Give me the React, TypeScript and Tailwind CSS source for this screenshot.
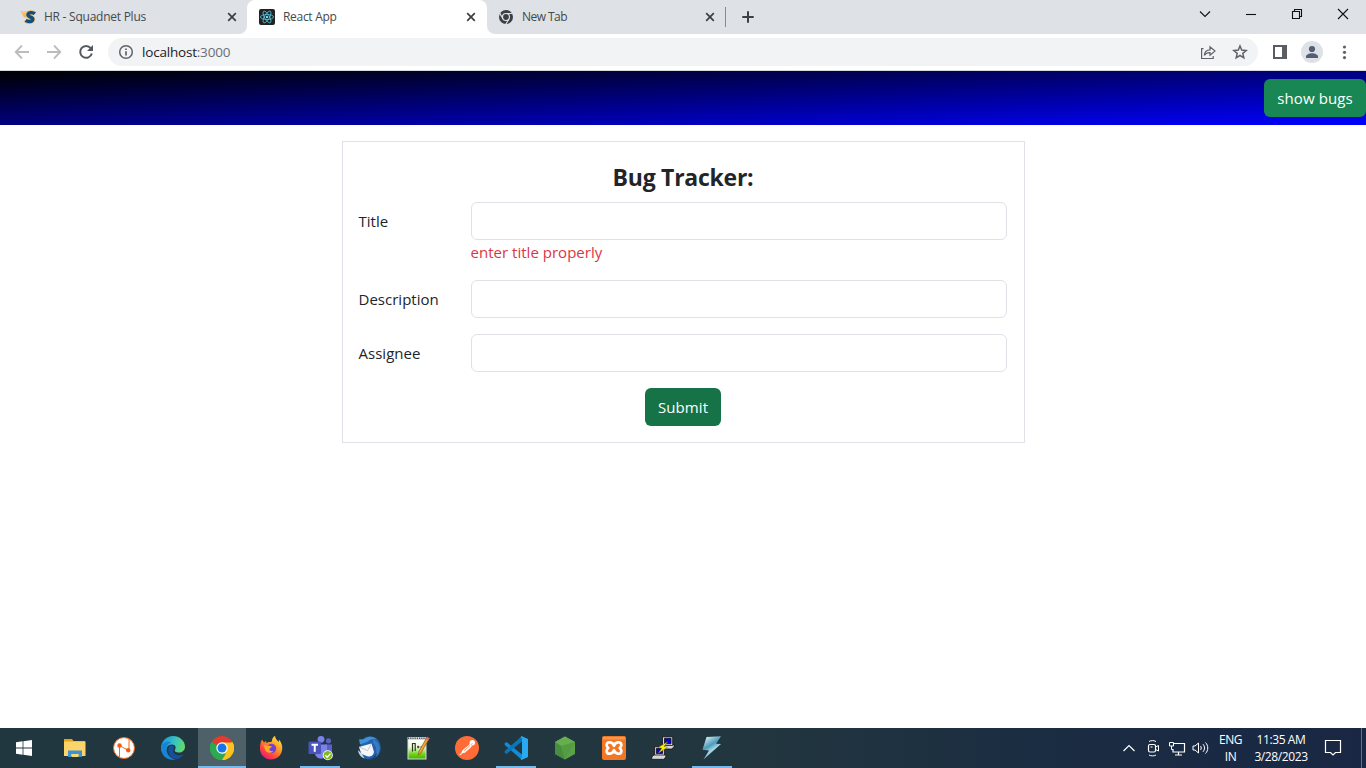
import React from "react";

const UI = "font-['Open_Sans','Noto_Sans',sans-serif]";

function CloseX() {
  return (
    <svg width="16" height="16" viewBox="0 0 16 16" className="shrink-0" fill="none" stroke="#3c4043" strokeWidth="1.7">
      <path d="M4.2 4.2l7.6 7.6M11.8 4.2l-7.6 7.6" />
    </svg>
  );
}

function SquadnetIcon() {
  return (
    <svg width="17" height="16" viewBox="0 0 17 16" className="shrink-0">
      <path d="M0 2h10L8 5.500H2z" fill="#f5c98a" />
      <path d="M2 4.500h5v4H4z" fill="#f2b765" />
      <path d="M3.500 11.500h6l-1 3H6z" fill="#f3c88e" />
      <path d="M14.800 4.800C13 3.200 8.400 3 8 5.600 7.800 8.400 13.200 7.800 12.800 10.400 12.200 13.200 7.600 12.800 5.600 11.400" fill="none" stroke="#f0b35c" strokeWidth="4.600" />
      <path d="M14.800 4.800C13 3.200 8.400 3 8 5.600 7.800 8.400 13.200 7.800 12.800 10.400 12.200 13.200 7.600 12.800 5.600 11.400" fill="none" stroke="#10507e" strokeWidth="3.400" />
    </svg>
  );
}

function ReactIcon() {
  return (
    <svg width="16" height="16" viewBox="0 0 16 16" className="shrink-0">
      <rect width="16" height="16" rx="2" fill="#222" />
      <g fill="none" stroke="#58c4dc" strokeWidth="0.8">
        <ellipse cx="8" cy="8" rx="6.600" ry="2.500" />
        <ellipse cx="8" cy="8" rx="6.600" ry="2.500" transform="rotate(60 8 8)" />
        <ellipse cx="8" cy="8" rx="6.600" ry="2.500" transform="rotate(120 8 8)" />
      </g>
      <circle cx="8" cy="8" r="1.300" fill="#61dafb" />
    </svg>
  );
}

function ChromeMono() {
  return (
    <svg width="16" height="16" viewBox="0 0 16 16" className="shrink-0">
      <circle cx="8" cy="8" r="7" fill="#3c4043" />
      <circle cx="8" cy="8" r="3.500" fill="none" stroke="#dee1e6" strokeWidth="1.200" />
      <g stroke="#dee1e6" strokeWidth="1.200">
        <path d="M8 4.500h6.600M4.970 9.750L1.700 4.100M11.030 9.750L7.700 15.500" />
      </g>
    </svg>
  );
}

function TabStrip() {
  return (
    <div className="flex h-[34px] bg-white text-[12px] text-[#45494d]">
      <div className="flex w-[247px] items-center rounded-br-lg bg-[#dee1e6] pl-5 pr-[7px]">
        <SquadnetIcon />
        <span className="ml-[7px] flex-1 whitespace-nowrap tracking-[-0.25px]">HR - Squadnet Plus</span>
        <CloseX />
      </div>
      <div className="w-60 bg-linear-to-b from-[#dee1e6] from-50% to-white to-50%">
        <div className="flex h-full items-center rounded-t-lg bg-white pl-3 pr-2">
          <ReactIcon />
          <span className="ml-2 flex-1 tracking-[-0.3px]">React App</span>
          <CloseX />
        </div>
      </div>
      <div className="flex flex-1 items-center rounded-bl-lg bg-[#dee1e6] pl-[11px]">
        <ChromeMono />
        <span className="ml-2 w-[180px] tracking-[-0.55px]">New Tab</span>
        <CloseX />
        <div className="ml-[7px] h-5 w-px bg-[#86898d]" />
        <svg width="16" height="16" viewBox="0 0 16 16" className="ml-3.5" stroke="#3c4043" strokeWidth="2">
          <path d="M8 2.300v11.400M2.300 8h11.400" />
        </svg>
        <div className="flex-1" />
        <svg width="161" height="34" viewBox="1199 0 161 34" className="mr-1.5" fill="none" stroke="#111" strokeWidth="1.100">
          <path d="M1200 11.500l5 5 5-5" />
          <path d="M1246 14.500h10" />
          <path d="M1292.500 11.500h7v7h-7zM1294.500 11.500v-2h7v7h-2" />
          <path d="M1338 9l10 10M1348 9l-10 10" />
        </svg>
      </div>
    </div>
  );
}

function Toolbar() {
  return (
    <div className="flex h-[37px] items-center border-b border-[#d5dbdc] bg-white">
      <svg width="108" height="36" viewBox="0 0 108 36" className="shrink-0" fill="none" strokeWidth="1.800">
        <g stroke="#babcbe">
          <path d="M29 18H16M22 11.500L15.700 18l6.300 6.500" />
          <path d="M47 18h13M54 11.500l6.300 6.500-6.300 6.500" />
        </g>
        <path d="M90.700 14.200A5.900 5.900 0 1 0 91.800 19.500" stroke="#55595d" strokeWidth="2" />
        <path d="M93 11v6h-6z" fill="#55595d" />
      </svg>
      <div className="flex h-7 w-[1150px] items-center rounded-full bg-[#f1f3f4] pl-2.5 pr-2.5">
        <svg width="16" height="16" viewBox="0 0 16 16" fill="none" stroke="#5f6368" strokeWidth="1.500">
          <circle cx="8" cy="8" r="6.300" />
          <path d="M8 7.200v4.300M8 4.400v1.600" strokeWidth="1.700" />
        </svg>
        <span className="ml-2 flex-1 text-[13.500px] tracking-[-0.200px] text-[#202124]">
          localhost<span className="text-[#6b6f73]">:3000</span>
        </span>
        <svg width="16" height="16" viewBox="0 0 16 16" className="mr-4" fill="none" stroke="#5f6368" strokeWidth="1.200">
          <path d="M3.500 4.600H1.600v9.900h11.600V12" />
          <path d="M4.300 11.300c.4-3.600 2.400-5.300 5.700-5.400V2.800l5 4.200-5 4.200V8.600c-2.600-.1-4.300.7-5.700 2.700z" />
        </svg>
        <svg width="16" height="16" viewBox="0 0 16 16" fill="none" stroke="#5f6368" strokeWidth="1.500">
          <path d="M8 2l1.700 4.100 4.500.4-3.400 2.900 1 4.400L8 11.500l-3.800 2.300 1-4.400-3.400-2.900 4.500-.4z" />
        </svg>
      </div>
      <svg width="108" height="36" viewBox="1258 0 108 36" className="shrink-0">
        <path d="M1273 11h14v14h-14zM1275 13v10h7V13z" fill="#5a5e63" fillRule="evenodd" />
        <circle cx="1312" cy="18" r="11" fill="#dee1e6" />
        <circle cx="1312" cy="15" r="3.100" fill="#525f75" />
        <path d="M1306 24v-1.500c0-2 3-3.300 6-3.300s6 1.300 6 3.300V24z" fill="#525f75" />
        <g fill="#5f6368">
          <circle cx="1344.500" cy="13" r="1.600" />
          <circle cx="1344.500" cy="18.300" r="1.600" />
          <circle cx="1344.500" cy="23.600" r="1.600" />
        </g>
      </svg>
    </div>
  );
}

function Field({ label, error }: { label: string; error?: string }) {
  return (
    <div className="mb-4 flex">
      <label className="w-[112px] pt-[7px] text-[15px] leading-6 tracking-[0.020px]">{label}</label>
      <div className="w-[536px]">
        <input className="block h-[38px] w-full rounded-md border border-[#dee2e6] bg-white px-3 outline-none" />
        {error && <div className="text-[15px] leading-6 tracking-[0.020px] text-[#dc3545]">{error}</div>}
      </div>
    </div>
  );
}

function Page() {
  return (
    <main className="flex-1 bg-white text-[#212529]">
      <header className="flex h-[54px] items-center justify-end bg-[linear-gradient(to_bottom_right,#000,#00f)]">
        <button className="h-[38px] w-[102px] rounded-md bg-[#198754] text-[15px] tracking-[0.100px] text-white">show bugs</button>
      </header>
      <form className="mx-auto mt-4 w-1/2 border border-[#dee2e6] p-4">
        <h4 className="mb-[7px] mt-px h-9 text-center text-[23px] font-bold leading-9 tracking-[-0.260px]">Bug Tracker:</h4>
        <Field label="Title" error="enter title properly" />
        <Field label="Description" />
        <Field label="Assignee" />
        <div className="flex justify-center">
          <button type="button" className="h-[38px] w-[76px] rounded-md bg-[#157347] text-[15px] tracking-[0.100px] text-white">Submit</button>
        </div>
      </form>
    </main>
  );
}

const I = ({ children }: { children: React.ReactNode }) => (
  <svg width="24" height="24" viewBox="0 0 24 24">{children}</svg>
);

const icons: { name: string; state?: string; art: React.ReactNode }[] = [
  {
    name: "explorer",
    art: (
      <I>
        <path d="M1 3h8l1.500 2H22v15H1z" fill="#e5a50f" />
        <path d="M1 5.500h21.500V20H1z" fill="#fbd56a" />
        <path d="M5 21v-6.500h14V21h-3.500v-3h-7v3z" fill="#3d92d6" />
        <path d="M8.500 18h7v3h-7z" fill="#f8d775" />
      </I>
    ),
  },
  {
    name: "node",
    art: (
      <I>
        <circle cx="12" cy="12" r="10.500" fill="#fff" stroke="#ee6b20" strokeWidth="1" />
        <path d="M7.500 21.500V9.500l8.500 4.800M17 14V2.500" fill="none" stroke="#ee6b20" strokeWidth="1" />
        <circle cx="7.500" cy="9.500" r="2.200" fill="#ee5f13" />
        <circle cx="16.200" cy="14.300" r="2.200" fill="#ee5f13" />
      </I>
    ),
  },
  {
    name: "edge",
    art: (
      <I>
        <defs>
          <linearGradient id="eg" x1="0" y1="0.300" x2="1" y2="0.500">
            <stop offset="0" stopColor="#1d91d7" />
            <stop offset=".55" stopColor="#36c4c4" />
            <stop offset="1" stopColor="#63dc61" />
          </linearGradient>
        </defs>
        <path d="M0 12C0 5 5.500 0 12 0s12 5 12 10.500c0 4-3 6-6 6s-5-1-4-2.700c1.400-2.300.4-5.300-3-5.300-5 0-7 5-5.500 10C2 18 0 15.500 0 12z" fill="url(#eg)" />
        <path d="M.1 11C1.500 6 7.500 4.500 11 6.500c-5 .5-6 5.300-5 9.500 1 4 5 7 9 7.500C6 25.500-.5 19 .1 11z" fill="#1586d7" />
        <path d="M9 9.300c-4.500 5 0 14 7 13.700 3-.3 5.700-3 6.600-4.800-4 2-10 1-10.600-3.200-.1-1.300.8-2 1-3C13.200 10.200 11 9 9 9.300z" fill="#164f9b" />
      </I>
    ),
  },
  {
    name: "chrome",
    state: "active",
    art: (
      <I>
        <path d="M12 12L1.600 6A12 12 0 0 1 22.400 6z" fill="#e33b2e" />
        <path d="M12 12L22.400 6A12 12 0 0 1 12 24z" fill="#fcc31e" />
        <path d="M12 12v12A12 12 0 0 1 1.600 6z" fill="#2da94f" />
        <path d="M12 6.500h10.700A12 12 0 0 1 12 24l5-9.200z" fill="#fcc31e" />
        <path d="M1.600 6L7.200 14.800 12 17.500h4L12 24A12 12 0 0 1 1.600 6z" fill="#2da94f" />
        <circle cx="12" cy="12" r="5.700" fill="#fff" />
        <circle cx="12" cy="12" r="4.500" fill="#1a73e8" />
      </I>
    ),
  },
  {
    name: "firefox",
    art: (
      <I>
        <defs>
          <linearGradient id="ff" x1=".9" y1="0" x2=".2" y2="1">
            <stop offset="0" stopColor="#fff04a" />
            <stop offset=".4" stopColor="#ff9b25" />
            <stop offset=".75" stopColor="#ff4141" />
            <stop offset="1" stopColor="#e11586" />
          </linearGradient>
        </defs>
        <path d="M3 3.500l2 3L7 5l.5 2C10 5.500 12 6 13 5.500 12.500 3 15 0 16 0c.5 3 2 4 4 6V3.500c3 4 3.800 7 3 11C22 20 17.500 23.500 12 23.500 5.500 23.500 1 18.500 1 12.500 1 9 1.500 6 3 3.500z" fill="url(#ff)" />
        <circle cx="12.500" cy="12.500" r="4.700" fill="#7143d1" />
        <path d="M4.500 9c3 0 4 1 8.300 1-.5 2-2.300 2-2.500 3.200 0 1.300 1.500 2.300 4 1.800-2 3-7 2-8-1z" fill="#ffa72b" />
      </I>
    ),
  },
  {
    name: "teams",
    state: "open",
    art: (
      <svg width="26" height="26" viewBox="0 0 26 26">
        <circle cx="14" cy="4.300" r="3.400" fill="#7b83eb" />
        <circle cx="21.500" cy="5.800" r="2.600" fill="#5b62c5" />
        <path d="M18 9.500h7v7c0 3-3 4-5 4z" fill="#5b62c5" />
        <path d="M8 9.500h12v8c0 8-11 8-12 1z" fill="#7b83eb" />
        <rect x="1.500" y="6.500" width="12.500" height="12.500" rx="1" fill="#4b53bc" />
        <path d="M4.500 9.700h6.500M7.750 9.700v7" stroke="#fff" strokeWidth="2" />
        <circle cx="20.800" cy="20.300" r="5" fill="#fff" />
        <circle cx="20.800" cy="20.300" r="4.200" fill="#7fba1c" />
        <path d="M18.300 20.300l1.900 2 3.300-3.700" stroke="#fff" strokeWidth="1.400" fill="none" />
      </svg>
    ),
  },
  {
    name: "thunderbird",
    art: (
      <I>
        <path d="M5 4C8 0 15-.5 19.500 2.500 24 6 25 13 22 18c-3 5-9 7-14 4.500C4 20 3.500 17 2.500 14z" fill="#2462ad" />
        <path d="M2 3.500c3-.5 4 .5 6-1C12-.5 17 .5 20 3.500c-4-1.500-7 0-10 2.500L3 8.500z" fill="#3f93dc" />
        <path d="M16 3.500c4 1 7 5 6.500 10-.5 4-2 6-4 7.500 1.500-5 1.500-10-2.500-14z" fill="#5cb0ec" opacity=".35" />
        <path d="M9 22.800c5 1 9-2 10.500-6 .8 2-1 5-3 6-2.500 1.300-5 1.200-7.500 0z" fill="#163f7d" />
        <path d="M2 11L14.500 7.500 17 16c-.5 3.500-3 4.700-6 4.500L4.500 18z" fill="#f6f6f7" />
        <path d="M2.500 11l8 3.700L14.300 8" fill="none" stroke="#b4bdc9" strokeWidth=".8" />
        <path d="M1 14c.5 4 3 7.500 6.500 8.500L5 18z" fill="#cfdcea" />
      </I>
    ),
  },
  {
    name: "notepad-plus",
    art: (
      <I>
        <defs>
          <linearGradient id="np" x1="0" y1="0" x2="0" y2="1">
            <stop offset="0" stopColor="#fff" />
            <stop offset=".4" stopColor="#eff8d8" />
            <stop offset=".75" stopColor="#72d61b" />
            <stop offset="1" stopColor="#43b700" />
          </linearGradient>
        </defs>
        <rect x="1.500" y="1" width="19" height="22.500" fill="#d7d9d9" />
        <rect x="2.500" y="4" width="17" height="18.500" fill="url(#np)" />
        <path d="M2 2.200h18" stroke="#4d5558" strokeWidth="1.500" strokeDasharray="1.200 1" />
        <path d="M6.500 7v8.500M6.500 7.500h2.700V15M11 11h2.500M12.200 9.800v2.400M14.500 11H17" fill="none" stroke="#263b1c" strokeWidth="1.200" />
        <path d="M21 1l2.500 1.200L15 17l-2.500 2 .3-3.300z" fill="#efa52b" stroke="#784719" strokeWidth=".6" />
        <path d="M21 1l2.500 1.200-1.200 2-2.400-1.300z" fill="#dc6673" />
      </I>
    ),
  },
  {
    name: "postman",
    art: (
      <I>
        <circle cx="12" cy="12" r="12" fill="#ff6c37" />
        <circle cx="17.300" cy="6.700" r="2.700" fill="#fff" />
        <path d="M15 8.500l1.500 1.700-6.500 6-3 .3.800-2z" fill="#fff" stroke="#fff" strokeWidth="1" />
        <path d="M9 14.500L4.500 19M8 16.500l-3 2.500M9.500 14.500l5-4.500" stroke="#fff" strokeWidth=".8" />
        <path d="M9 14.800l6-5.200M16 8.500l1.500-1" stroke="#ff6c37" strokeWidth=".7" />
      </I>
    ),
  },
  {
    name: "vscode",
    state: "open",
    art: (
      <I>
        <path d="M.5 7.500l2-1.500L18 18.500V24L.8 9z" fill="#168bd1" />
        <path d="M.5 16.500l2 1.500L18 5.500V0L.8 15z" fill="#0876bd" />
        <path d="M17.500 0L24 3v18l-6.500 3-1-1.200 1.500-1V2.200l-1.500-1z" fill="#29a9f2" />
      </I>
    ),
  },
  {
    name: "nodejs",
    art: (
      <I>
        <path d="M12 .5l10 5.600v11.800l-10 5.600-10-5.600V6.100z" fill="#5ba247" />
        <path d="M12 .5l10 5.600L8 10 2 6.100z" fill="#68ae4d" />
        <path d="M2 6.100L8 10l4 13.500-10-5.600z" fill="#458f3e" />
        <path d="M22 6.100L8 10l4 13.500z" fill="#549b44" />
      </I>
    ),
  },
  {
    name: "xampp",
    art: (
      <I>
        <rect width="24" height="24" rx="2" fill="#f37623" />
        <path d="M1 1h22v2.500H1z" fill="#f69956" />
        <path d="M12 9.800C10.800 5.500 5 5 4.600 9c0 1.500.8 2.300 1.700 3-.9.700-1.700 1.500-1.700 3 .4 4 6.200 3.500 7.400-.8 1.200 4.300 7 4.800 7.400.8 0-1.500-.8-2.300-1.700-3 .9-.7 1.700-1.500 1.700-3-.4-4-6.200-3.500-7.400.8z" fill="none" stroke="#fff" strokeWidth="2.700" strokeLinejoin="round" />
      </I>
    ),
  },
  {
    name: "putty",
    art: (
      <I>
        <g stroke="#111" strokeWidth=".8">
          <path d="M12 10.500l2-2h9v2l-2 2.500h-9z" fill="#d8d8d8" />
          <path d="M11.500.8h10.200v8.700H11.500z" fill="#d8d8d8" />
          <path d="M13.500 2.300h6.500v5.500h-6.500z" fill="#0000e0" />
          <path d="M3.500 10.800h10v8.700h-10z" fill="#d8d8d8" />
          <path d="M5.300 12.500h6.300v5H5.300z" fill="#0000e0" />
          <path d="M.8 21l2-2h12v2l-2 2.300H.8z" fill="#d8d8d8" />
          <path d="M17 5.500l-10 6 3.800.8L7 17.500l9.500-6.300-3.500-.7z" fill="#ffef00" stroke="#555000" strokeWidth=".4" />
        </g>
      </I>
    ),
  },
  {
    name: "bolt",
    state: "open",
    art: (
      <I>
        <defs>
          <linearGradient id="bo" x1=".2" y1="0" x2=".7" y2="1">
            <stop offset="0" stopColor="#d9f2fa" />
            <stop offset=".4" stopColor="#4d9ab7" />
            <stop offset=".6" stopColor="#a5d8e8" />
            <stop offset="1" stopColor="#347f9e" />
          </linearGradient>
        </defs>
        <path d="M6.500 1L21 .3 16 7.700l5 .3L3.500 23.500 9 14.500l-6.500-.8z" fill="url(#bo)" />
      </I>
    ),
  },
];

function Taskbar() {
  return (
    <footer className="flex h-10 bg-[linear-gradient(90deg,#21373f_0%,#22363f_55%,#1a2c42_78%,#192744_100%)] text-white">
      <div className="mr-[3px] flex w-12 items-center justify-center">
        <svg width="16" height="16" viewBox="0 0 16 16" fill="#fff">
          <path d="M0 2.200L6.600 1.300v6.200H0zM7.400 1.200L16 0v7.500H7.400zM0 8.400h6.600v6.300L0 13.800zM7.400 8.400H16V16l-8.600-1.200z" />
        </svg>
      </div>
      <div className="flex gap-px">
        {icons.map((it) => (
          <div key={it.name} className={it.state === "active" ? "flex w-12 flex-col items-center bg-[#4e6068]" : "flex w-12 flex-col items-center"}>
            <div className="flex h-[38px] items-center pt-0.5">{it.art}</div>
            {it.state && <div className={it.state === "active" ? "h-0.5 w-12 bg-[#76b9ed]" : "h-0.5 w-10 bg-[#76b9ed]"} />}
          </div>
        ))}
      </div>
      <div className="flex-1" />
      <svg width="96" height="40" viewBox="1118 0 96 40" fill="none" stroke="#fff" strokeWidth="1.200">
        <path d="M1123.500 23l5.500-5.500 5.500 5.500" />
        <rect x="1148.500" y="16.500" width="7" height="7.500" rx="1.500" />
        <path d="M1155.500 19l3-1.500v5.500l-3-1.500M1149 13.500c2-1.200 5-1.200 7 0M1149 27c2 1.200 5 1.200 7 0M1150.500 19h2" strokeWidth="1" />
        <path d="M1174 15.500h10.500v8.500H1173v-3M1178.500 24v3M1175 27h7" />
        <path d="M1169.500 14.500h4v3.500h-4zM1171.500 18v3.500h1.500" strokeWidth="1" />
        <path d="M1193 18h2l3.500-3v10l-3.500-3h-2z" strokeWidth="1" />
        <path d="M1200.500 18c1 1.200 1 2.800 0 4M1203 16.200c2 2.200 2 5.400 0 7.600M1205.500 14.500c3 3 3 8 0 11" strokeWidth="1" />
      </svg>
      <div className="w-[33px] pt-[3px] text-center text-[12px] leading-[17px] tracking-[-0.400px]">
        <div>ENG</div>
        <div>IN</div>
      </div>
      <div className="ml-[3px] w-[62px] whitespace-nowrap pt-[3px] text-center text-[12px] leading-[17px] tracking-[-0.400px]">
        <div className="pt-px leading-4">11:35 AM</div>
        <div>3/28/2023</div>
      </div>
      <svg width="54" height="40" viewBox="1312 0 54 40" fill="none" stroke="#fff" strokeWidth="1.200">
        <path d="M1325.500 12.500h15v12h-5l-2.500 2.500-2.500-2.500h-5z" />
        <path d="M1361.500 0v40" stroke="#66717f" strokeWidth="1" />
      </svg>
    </footer>
  );
}

export default function App() {
  return (
    <div className={"flex h-screen w-full flex-col overflow-hidden " + UI}>
      <TabStrip />
      <Toolbar />
      <Page />
      <Taskbar />
    </div>
  );
}
